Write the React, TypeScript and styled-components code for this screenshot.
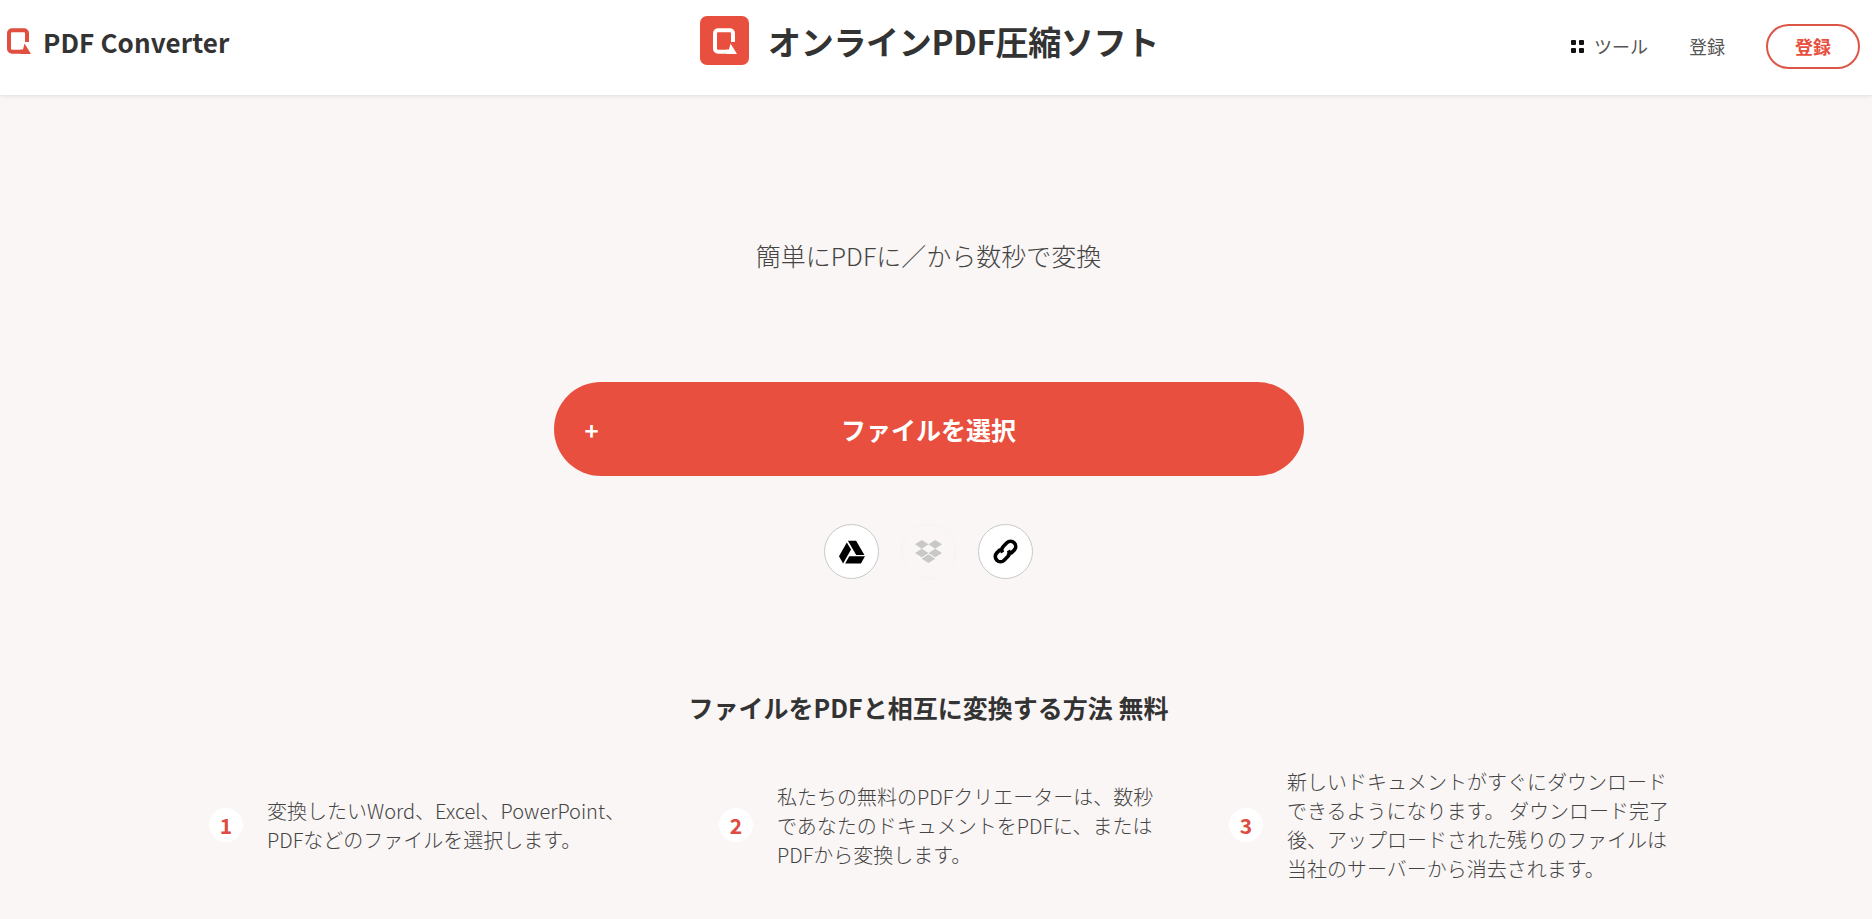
import React from "react";
import styled, { createGlobalStyle } from "styled-components";
import { FaDropbox, FaGoogleDrive } from "react-icons/fa";

const FONT = `"Noto Sans CJK JP", "Noto Sans", sans-serif`;

const steps = [
  { lines: ["変換したいWord、Excel、PowerPoint、", "PDFなどのファイルを選択します。"] },
  { lines: ["私たちの無料のPDFクリエーターは、数秒", "であなたのドキュメントをPDFに、または", "PDFから変換します。"] },
  {
    lines: [
      "新しいドキュメントがすぐにダウンロード",
      "できるようになります。 ダウンロード完了",
      "後、アップロードされた残りのファイルは",
      "当社のサーバーから消去されます。",
    ],
  },
];

const LogoMark: React.FC<{ color: string; size: number }> = ({ color, size }) => (
  <svg width={size} height={(size * 26) / 24} viewBox="0 0 24 26" fill="none">
    <path
      d="M15 23.8H5a3 3 0 0 1-3-3V5.2a3 3 0 0 1 3-3h12a3 3 0 0 1 3 3V14"
      stroke={color}
      strokeWidth="4"
    />
    <path d="M17.5 15.5L24 26H13.5V21.6H16Z" fill={color} />
  </svg>
);

const ChainIcon: React.FC = () => (
  <svg width="31" height="31" viewBox="0 0 24 24" fill="none" stroke="#000" strokeWidth="2.8">
    <g transform="rotate(-45 12 12)">
      <path d="M10.5 8h-4a4 4 0 0 0 0 8h4a4 4 0 0 0 3.8-3" />
      <path d="M13.5 16h4a4 4 0 0 0 0-8h-4a4 4 0 0 0-3.8 3" />
    </g>
  </svg>
);

const App: React.FC = () => {
  return (
    <Page>
      <GlobalStyle />
      <Header>
        <Brand>
          <LogoMark color="#e04f3f" size={24} />
          <BrandName>PDF Converter</BrandName>
        </Brand>
        <TitleGroup>
          <TitleIcon>
            <LogoMark color="#ffffff" size={24} />
          </TitleIcon>
          <Title>オンラインPDF圧縮ソフト</Title>
        </TitleGroup>
        <Nav>
          <NavTools>
            <GridIcon>
              <i />
              <i />
              <i />
              <i />
            </GridIcon>
            ツール
          </NavTools>
          <NavLink>登録</NavLink>
          <SignUp>登録</SignUp>
        </Nav>
      </Header>

      <Main>
        <Subtitle>簡単にPDFに／から数秒で変換</Subtitle>
        <PickButton>
          <PlusSign>+</PlusSign>
          ファイルを選択
        </PickButton>
        <SourceRow>
          <SourceButton>
            <FaGoogleDrive size={26} />
          </SourceButton>
          <SourceButton $disabled>
            <FaDropbox size={27} />
          </SourceButton>
          <SourceButton>
            <ChainIcon />
          </SourceButton>
        </SourceRow>
        <HowTitle>ファイルをPDFと相互に変換する方法 無料</HowTitle>
        <Steps>
          {steps.map((step, i) => (
            <Step key={i}>
              <StepNumber>{i + 1}</StepNumber>
              <StepText>
                {step.lines.map((line) => (
                  <div key={line}>{line}</div>
                ))}
              </StepText>
            </Step>
          ))}
        </Steps>
      </Main>
    </Page>
  );
};

const GlobalStyle = createGlobalStyle`
  html, body {
    margin: 0;
    padding: 0;
    background: #faf6f5;
    font-family: ${FONT};
  }
`;

const Page = styled.div`
  min-height: 100vh;
  background: #faf6f5;
  overflow: hidden;
`;

const Header = styled.header`
  display: grid;
  grid-template-columns: 1fr auto 1fr;
  align-items: center;
  height: 95px;
  background: #fff;
  box-shadow: 0 1px 4px rgba(0, 0, 0, 0.1);
`;

const Brand = styled.div`
  display: flex;
  align-items: center;
  gap: 12px;
  padding-left: 7px;
  padding-bottom: 13px;
`;

const BrandName = styled.span`
  font-size: 26px;
  font-weight: 700;
  color: #333;
  letter-spacing: 0.1px;
`;

const TitleGroup = styled.div`
  display: flex;
  align-items: center;
  gap: 19px;
  margin-left: -13px;
  padding-bottom: 14px;
`;

const TitleIcon = styled.div`
  display: flex;
  align-items: center;
  justify-content: center;
  width: 49px;
  height: 49px;
  border-radius: 7px;
  background: #e84f3e;
`;

const Title = styled.h1`
  margin: 0;
  font-size: 33px;
  font-weight: 700;
  letter-spacing: -0.3px;
  color: #333;
`;

const Nav = styled.nav`
  display: flex;
  align-items: center;
  justify-content: flex-end;
  padding-right: 12px;
  padding-bottom: 3px;
`;

const NavTools = styled.span`
  display: flex;
  align-items: center;
  gap: 10px;
  font-size: 18px;
  color: #555;
`;

const GridIcon = styled.span`
  display: grid;
  grid-template-columns: 5px 5px;
  gap: 3px;

  i {
    display: block;
    width: 5px;
    height: 5px;
    border-radius: 1px;
    background: #111;
  }
`;

const NavLink = styled.span`
  margin-left: 41px;
  font-size: 18px;
  color: #555;
`;

const SignUp = styled.button`
  width: 94px;
  height: 45px;
  margin-left: 41px;
  border: 2px solid #dc5648;
  border-radius: 23px;
  background: #fff;
  color: #e84f3e;
  font-family: ${FONT};
  font-size: 18px;
  font-weight: 700;
`;

const Main = styled.main`
  display: flex;
  flex-direction: column;
  align-items: center;
  padding-right: 15px;
`;

const Subtitle = styled.p`
  margin: 136px 0 0;
  font-size: 25px;
  line-height: 48px;
  color: #444;
  font-weight: 300;
`;

const PickButton = styled.button`
  position: relative;
  width: 750px;
  height: 94px;
  margin-top: 103px;
  border: none;
  border-radius: 47px;
  background: #e84f3e;
  color: #fff;
  font-family: ${FONT};
  font-size: 25px;
  font-weight: 700;
`;

const PlusSign = styled.span`
  position: absolute;
  left: 31px;
  top: 50%;
  transform: translateY(-50%);
  font-size: 24px;
`;

const SourceRow = styled.div`
  display: flex;
  gap: 22px;
  margin-top: 48px;
`;

const SourceButton = styled.button<{ $disabled?: boolean }>`
  display: flex;
  align-items: center;
  justify-content: center;
  width: 55px;
  height: 55px;
  padding: 0;
  border: 1px solid ${(props) => (props.$disabled ? "#f7f3f2" : "#c9c9c9")};
  border-radius: 50%;
  background: ${(props) => (props.$disabled ? "#f9f6f5" : "#fff")};
  color: ${(props) => (props.$disabled ? "#c8c8c8" : "#000")};
`;

const HowTitle = styled.h2`
  margin: 103px 0 0;
  font-size: 25px;
  line-height: 50px;
  font-weight: 700;
  color: #333;
`;

const Steps = styled.div`
  display: grid;
  grid-template-columns: repeat(3, 510px);
  align-self: flex-start;
  height: 116px;
  margin: 35px 0 0 209px;
`;

const Step = styled.div`
  display: flex;
  align-items: center;
  gap: 24px;
`;

const StepNumber = styled.span`
  display: flex;
  align-items: center;
  justify-content: center;
  flex-shrink: 0;
  width: 34px;
  height: 34px;
  border-radius: 50%;
  background: #fff;
  color: #dd4b41;
  font-size: 21px;
  font-weight: 700;
`;

const StepText = styled.div`
  font-size: 20px;
  line-height: 29px;
  font-weight: 300;
  color: #444;
  white-space: nowrap;
`;

export default App;
